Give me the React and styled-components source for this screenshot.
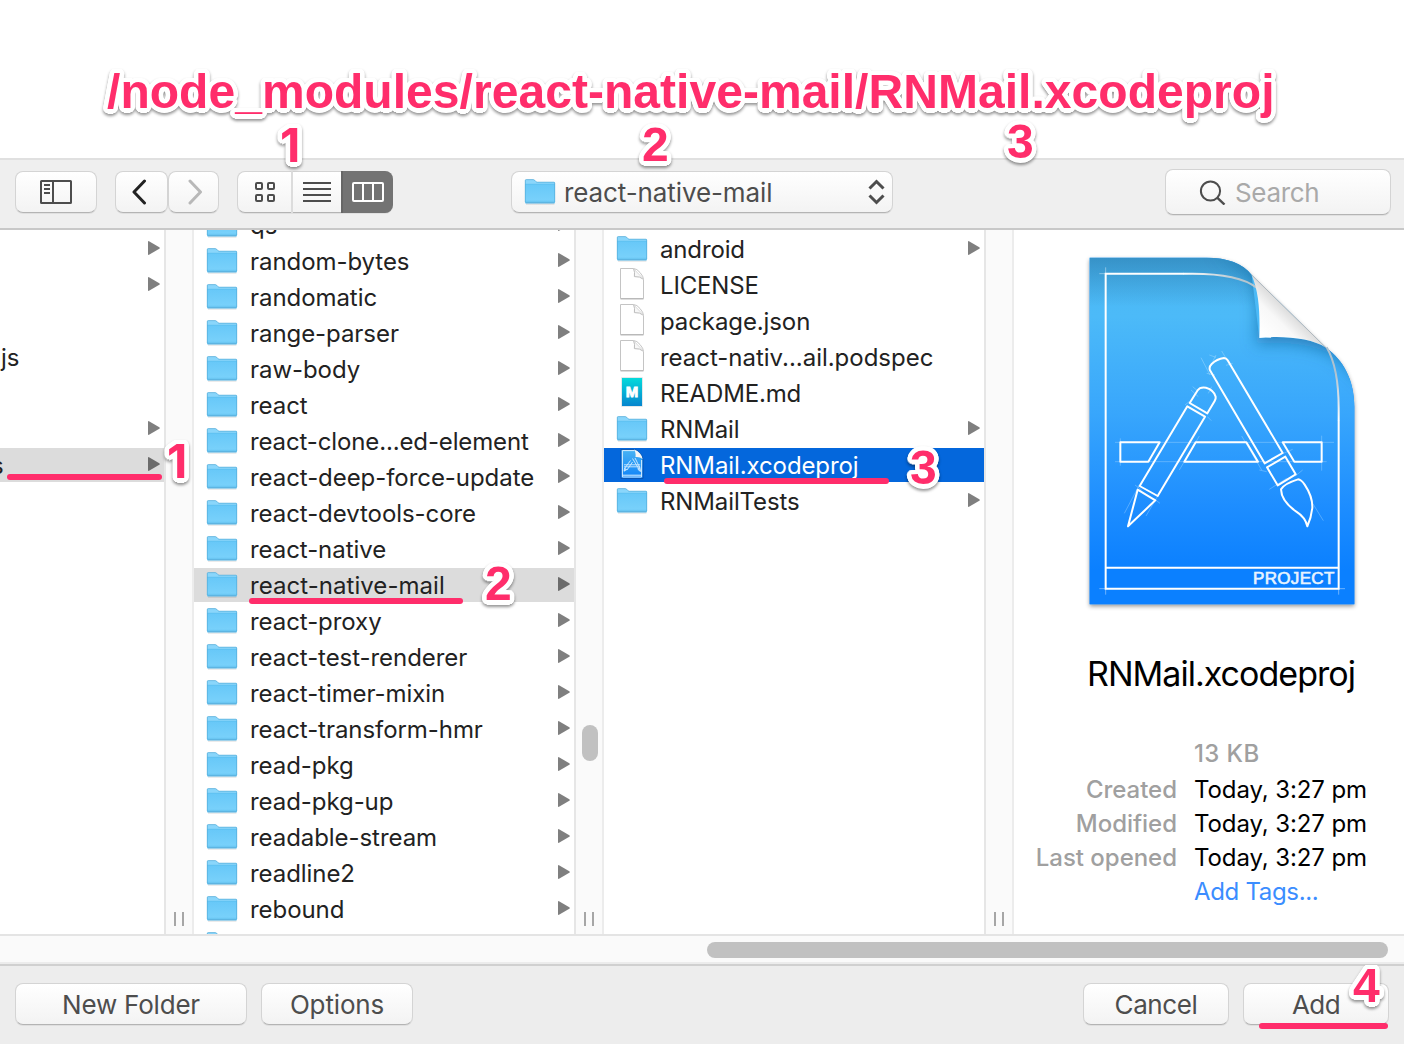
import React from "react";
import styled, { createGlobalStyle, css } from "styled-components";

const PINK = "#ff2d6b";

const GlobalStyle = createGlobalStyle`
  *, *::before, *::after { box-sizing: border-box; }
  body {
    margin: 0;
    background: #fff;
    font-family: Inter, Roboto, "Liberation Sans", sans-serif;
    overflow: hidden;
  }
  button { font: inherit; }
`;

const Screen = styled.div`
  position: relative;
  display: flex;
  flex-direction: column;
  width: 1404px;
  height: 1044px;
  overflow: hidden;
  background: #fff;
`;

const TitleArea = styled.header`
  flex: none;
  height: 158px;
`;

const surface = css`
  border: 1px solid #d4d4d4;
  border-bottom-color: #b4b4b4;
  background: linear-gradient(#fff, #f3f3f3);
  box-shadow: 0 1px 0 rgba(0, 0, 0, 0.06);
`;

const Toolbar = styled.div`
  flex: none;
  display: flex;
  align-items: center;
  height: 72px;
  padding: 0 13px 4px 15px;
  border-top: 2px solid #e0e0e0;
  border-bottom: 2px solid #c8c8c8;
  background: #efefef;
`;

const ToolButton = styled.button`
  ${surface}
  display: grid;
  place-items: center;
  width: ${(p) => p.$width}px;
  height: 42px;
  margin: 0 ${(p) => p.$after || 0}px 0 0;
  padding: 0;
  border-radius: 8px;
`;

const Segments = styled.div`
  ${surface}
  display: flex;
  width: 156px;
  height: 42px;
  margin-right: 118px;
  border-radius: 8px;
`;

const Segment = styled.button`
  flex: none;
  display: grid;
  place-items: center;
  width: ${(p) => p.$width}px;
  height: 42px;
  margin: -1px 0;
  padding: 0;
  border: 0;
  border-left: ${(p) => (p.$divided ? "2px solid #dcdcdc" : p.$active ? "2px solid #666" : "0")};
  border-radius: ${(p) => (p.$active ? "0 8px 8px 0" : "0")};
  background: ${(p) => (p.$active ? "#737373" : "transparent")};
`;

const PathPopup = styled.button`
  ${surface}
  display: flex;
  align-items: center;
  width: 382px;
  height: 42px;
  margin-right: auto;
  padding: 0 7px 0 12px;
  border-radius: 8px;
  color: #4d4d4d;
  font-size: 26px;
  letter-spacing: ${(p) => p.$spacing}px;
`;

const PopupLabel = styled.span`
  flex: 1;
  padding-left: 8px;
  text-align: left;
`;

const SearchField = styled.div`
  ${surface}
  display: flex;
  align-items: center;
  gap: 9px;
  width: 226px;
  height: 46px;
  padding-left: 33px;
  border-radius: 8px;
  color: #a9a9a9;
  font-size: 26px;
  letter-spacing: -0.35px;
`;

const Browser = styled.main`
  flex: none;
  display: flex;
  height: 704px;
  overflow: hidden;
`;

const Column = styled.ul`
  flex: none;
  width: ${(p) => p.$width}px;
  margin: ${(p) => p.$scroll}px 0 0;
  padding: 0;
  list-style: none;
`;

const Row = styled.li`
  display: flex;
  align-items: center;
  height: 34px;
  margin-bottom: 2px;
  padding: 0 4px 0 ${(p) => (p.$clipped ? 0 : 12)}px;
  background: ${(p) => (p.$state === "active" ? "#0467dc" : p.$state === "path" ? "#dcdcdc" : "transparent")};
  color: ${(p) => (p.$state === "active" ? "#fff" : "#222")};
  font-size: 24px;
`;

const IconSlot = styled.span`
  flex: none;
  display: grid;
  place-items: center;
  width: 32px;
  height: 34px;
  margin-right: 12px;
`;

const Label = styled.span`
  flex: 1;
  white-space: nowrap;
  line-height: 34px;
  letter-spacing: ${(p) => p.$spacing}px;
  margin-left: ${(p) => p.$shift || 0}px;
  padding-top: 1px;
`;

const Gutter = styled.div`
  flex: none;
  display: flex;
  flex-direction: column;
  justify-content: flex-end;
  align-items: center;
  width: 30px;
  padding-bottom: 8px;
  border-left: 2px solid #e6e6e6;
  border-right: 2px solid #ececec;
  background: #fafafa;
`;

const VerticalThumb = styled.div`
  width: 16px;
  height: 36px;
  margin: 0 0 151px 2px;
  border-radius: 8px;
  background: #c1c1c1;
`;

const Grip = styled.div`
  width: 10px;
  height: 14px;
  border-left: 2px solid #a6a6a6;
  border-right: 2px solid #a6a6a6;
`;

const Preview = styled.section`
  flex: 1;
  display: flex;
  flex-direction: column;
  padding-top: 10px;
`;

const PreviewArt = styled.svg`
  flex: none;
  margin-left: 56px;
`;

const PreviewName = styled.h1`
  width: 414px;
  margin: 32px 0 0;
  color: #000;
  font-size: 34px;
  font-weight: 400;
  line-height: 44px;
  letter-spacing: -0.97px;
  text-align: center;
`;

const Facts = styled.dl`
  display: grid;
  grid-template-columns: 163px 1fr;
  column-gap: 17px;
  grid-template-rows: 36px;
  grid-auto-rows: 34px;
  margin: 41px 0 0;
  font-size: 24px;
  line-height: 34px;
  white-space: nowrap;
`;

const FactName = styled.dt`
  color: #a0a0a0;
  font-weight: 500;
  letter-spacing: -0.03px;
  text-align: right;
`;

const FactValue = styled.dd`
  margin: 0;
  color: ${(p) => p.$color || "#000"};
  font-weight: ${(p) => (p.$strong ? 500 : 400)};
  letter-spacing: ${(p) => p.$spacing ?? -0.1}px;
`;

const ScrollTrack = styled.div`
  flex: none;
  display: flex;
  justify-content: flex-end;
  height: 30px;
  padding: 6px 16px 0 0;
  border-top: 2px solid #e4e4e4;
  border-bottom: 2px solid #ececec;
  background: #fafafa;
`;

const HorizontalThumb = styled.div`
  width: 681px;
  height: 16px;
  border-radius: 8px;
  background: #c1c1c1;
`;

const Footer = styled.footer`
  flex: 1;
  display: flex;
  align-items: flex-start;
  gap: 14px;
  padding: 17px 15px 0;
  border-top: 2px solid #d0d0d0;
  background: #ededed;
`;

const PushButton = styled.button`
  ${surface}
  width: ${(p) => p.$width}px;
  height: 42px;
  margin-left: ${(p) => (p.$pushRight ? "auto" : "0")};
  padding: 0;
  border-radius: 8px;
  color: #4d4d4d;
  font-size: 26px;
  letter-spacing: ${(p) => p.$spacing}px;
`;

const halo = Array.from({ length: 24 }, (_, i) => {
  const angle = (i / 24) * Math.PI * 2;
  return `${(Math.cos(angle) * 4.5).toFixed(2)}px ${(Math.sin(angle) * 4.5).toFixed(2)}px 0 #fff`;
}).join(", ");

const Callout = styled.span`
  position: absolute;
  left: ${(p) => p.$x}px;
  top: ${(p) => p.$baseline - 43}px;
  color: ${PINK};
  font: 700 48px/53px "Liberation Sans", Arial, sans-serif;
  letter-spacing: ${(p) => p.$spacing || 0}px;
  white-space: nowrap;
  text-shadow: ${halo}, 0 0 3px #fff;
  filter: drop-shadow(0 2px 1.5px rgba(0, 0, 0, 0.42));
`;

const CalloutOne = styled(Callout)`
  font: 700 47px/53px Inter, sans-serif;
`;

const Underline = styled.span`
  position: absolute;
  left: ${(p) => p.$x}px;
  top: ${(p) => p.$y}px;
  width: ${(p) => p.$width}px;
  height: 6px;
  border-radius: 3px;
  background: ${PINK};
`;

const FolderIcon = () => (
  <svg width="32" height="26" viewBox="-1 0 32 26">
    <defs>
      <linearGradient id="folderFront" x1="0" y1="0" x2="0" y2="1">
        <stop offset="0" stopColor="#67c8f8" />
        <stop offset="1" stopColor="#7bd2fb" />
      </linearGradient>
    </defs>
    <path d="M1 25h28.4" stroke="#000" strokeOpacity=".16" />
    <path d="M0 1.6Q0 .4 1.2 .4H8.2Q9 .4 9.6 1L11 2.6Q11.400 3 12.200 3H29Q30 3 30 4V23.300Q30 24.200 29 24.200H1Q0 24.200 0 23.300Z" fill="#8ad6fb" />
    <path d="M0 5H30V23.300Q30 24.200 29 24.200H1Q0 24.200 0 23.300Z" fill="url(#folderFront)" />
    <path d="M.4 23.800H29.600" stroke="#4ea6d4" strokeWidth=".9" />
    <path d="M.3 5.200H29.700M.3 22.300H29.700" stroke="#56b8e8" strokeWidth=".5" />
    <path d="M.3 23V1.600Q.3 .6 1.200 .6H8.200Q9 .6 9.600 1.200L11 2.700Q11.400 3.200 12.200 3.200H29Q29.700 3.200 29.700 4V23" fill="none" stroke="#52abd8" strokeWidth=".7" />
  </svg>
);

const DocIcon = () => (
  <svg width="26" height="34" viewBox="0 0 26 34">
    <path d="M1.500 .5H14.500Q18 .7 21 4.500Q24.500 8.500 24.500 11.500V30.500H1.500Z" fill="#fff" stroke="#c4c4c4" />
    <path d="M1.500 31h23" stroke="#aaa" strokeWidth=".8" />
    <path d="M14.600 .8Q16 4 15.400 8.600Q21 8.200 24.200 11.200" fill="#f7f7f7" stroke="#bcbcbc" />
    <path d="M14.800 1L24 10.500" stroke="#cfcfcf" strokeWidth=".8" />
  </svg>
);

const MarkdownIcon = () => (
  <svg width="22" height="32" viewBox="0 0 22 32">
    <defs>
      <linearGradient id="md" x1="0" y1="0" x2="0" y2="1">
        <stop offset="0" stopColor="#05dadb" />
        <stop offset="1" stopColor="#0685ce" />
      </linearGradient>
    </defs>
    <rect x=".3" y=".3" width="21.400" height="29.400" fill="#d8dfe2" />
    <rect x="1" y="1" width="20" height="28" fill="url(#md)" />
    <text x="11" y="20.300" textAnchor="middle" fill="#fff" stroke="#fff" strokeWidth=".9" fontFamily="Liberation Sans, Arial, sans-serif" fontWeight="700" fontSize="15">M</text>
  </svg>
);

const XcodeSmallIcon = () => (
  <svg width="24" height="34" viewBox="0 0 24 34">
    <defs>
      <linearGradient id="xs" x1="0" y1="0" x2="0" y2="1">
        <stop offset="0" stopColor="#49b4f3" />
        <stop offset="1" stopColor="#0f82f8" />
      </linearGradient>
    </defs>
    <path d="M1 1.500H14Q18 2 20 5Q23 8 23 12V30.500H1Z" fill="url(#xs)" stroke="#0a4da4" strokeWidth=".8" />
    <path d="M14 1.500Q16 4 15.500 9Q20 8.500 22.600 11Q22.500 8.500 20 5.500Q17.500 2.500 14 1.500Z" fill="#f5f5f5" />
    <path d="M14.500 2.600H2.400V29H21.600V12M2.400 27.200H21.600" fill="none" stroke="#d9efff" strokeWidth="1" />
    <path d="M12.500 10.500L18.300 20M15 10L20 20M10.500 12.500L4.500 20.500M12.500 14L7 22M4 16.800H20.200M4 18.800H20.200" fill="none" stroke="#d4ecff" strokeWidth=".9" />
    <path d="M4 23.200L4.600 20.200L6.800 21.600ZM17.800 20.500L20 19.800L20.600 23.500Q18.200 22.500 17.800 20.500Z" fill="#9ed0ff" stroke="#e6f5ff" strokeWidth=".7" />
  </svg>
);

const icons = { folder: FolderIcon, doc: DocIcon, md: MarkdownIcon, xcode: XcodeSmallIcon };

const Arrow = ({ dark }) => (
  <svg width="12" height="16" viewBox="0 0 12 16">
    <path d="M0 .8Q0 -.2 1 .2L11.300 6.200Q12.300 7 11.300 7.800L1 13.800Q0 14.200 0 13.200Z" fill={dark ? "#6b6b6b" : "#7f7f7f"} />
  </svg>
);

const SidebarIcon = () => (
  <svg width="32" height="24" viewBox="0 0 32 24" fill="none" stroke="#4d4d4d" strokeWidth="2">
    <rect x="1" y="1" width="30" height="22" rx=".5" />
    <path d="M13 1V23M4 5H10M4 9H10M4 13H10" />
  </svg>
);

const Chevron = ({ back }) => (
  <svg width="20" height="26" viewBox="0 0 20 26" fill="none" strokeWidth="3" strokeLinecap="round" strokeLinejoin="round" stroke={back ? "#222" : "#b8b8b8"}>
    <path d={back ? "M12.500 2L2 13L12.500 24" : "M6 2L16.500 13L6 24"} />
  </svg>
);

const GridIcon = () => (
  <svg width="22" height="22" viewBox="0 0 22 22" fill="none" stroke="#4d4d4d" strokeWidth="2">
    <rect x="2" y="2" width="6" height="6" rx="1" />
    <rect x="14" y="2" width="6" height="6" rx="1" />
    <rect x="2" y="14" width="6" height="6" rx="1" />
    <rect x="14" y="14" width="6" height="6" rx="1" />
  </svg>
);

const LinesIcon = () => (
  <svg width="28" height="20" viewBox="0 0 28 20" stroke="#4d4d4d" strokeWidth="2">
    <path d="M0 1H28M0 7H28M0 13H28M0 19H28" />
  </svg>
);

const ColumnsIcon = () => (
  <svg width="32" height="20" viewBox="0 0 32 20" fill="none" stroke="#fff" strokeWidth="2">
    <rect x="1" y="1" width="30" height="18" rx="1" />
    <path d="M11 1V19M21 1V19" />
  </svg>
);

const UpDownIcon = () => (
  <svg width="17" height="26" viewBox="0 0 17 26" fill="none" stroke="#4d4d4d" strokeWidth="3">
    <path d="M1.500 9.500L8.500 2.500L15.500 9.500M1.500 16.500L8.500 23.500L15.500 16.500" />
  </svg>
);

const SearchIcon = () => (
  <svg width="27" height="26" viewBox="0 0 27 26" fill="none" stroke="#4d4d4d" strokeWidth="2">
    <circle cx="11.500" cy="12" r="9.600" />
    <path d="M18.200 18.600L25.500 25.500" strokeWidth="2.400" />
  </svg>
);

const PAGE = "M59 53H410C470 53 520 70 545 105L568 294C640 286 725 295 768 323C820 360 853 420 853 500V1093H59Z";
const SHEET = "M59 53H410C470 53 520 70 545 105L768 323C820 360 853 420 853 500V1093H59Z";

const ProjectArt = () => (
  <PreviewArt width="310" height="380" viewBox="0 0 930 1140">
    <defs>
      <linearGradient id="page" x1="0" y1="53" x2="0" y2="1093" gradientUnits="userSpaceOnUse">
        <stop offset="0" stopColor="#4bb8f2" />
        <stop offset=".17" stopColor="#4cbaf8" />
        <stop offset=".45" stopColor="#38a6fc" />
        <stop offset=".72" stopColor="#1d8dff" />
        <stop offset=".9" stopColor="#0b80ff" />
        <stop offset="1" stopColor="#0b80ff" />
      </linearGradient>
      <linearGradient id="topShade" x1="0" y1="53" x2="0" y2="200" gradientUnits="userSpaceOnUse">
        <stop offset="0" stopColor="#1a5d8c" stopOpacity=".42" />
        <stop offset="1" stopColor="#1a5d8c" stopOpacity="0" />
      </linearGradient>
      <linearGradient id="curl" x1="590" y1="290" x2="672" y2="205" gradientUnits="userSpaceOnUse">
        <stop offset="0" stopColor="#fff" />
        <stop offset=".5" stopColor="#f8f8f8" />
        <stop offset="1" stopColor="#d2d2d2" />
      </linearGradient>
      <linearGradient id="frameTop" x1="340" y1="0" x2="500" y2="0" gradientUnits="userSpaceOnUse">
        <stop offset="0" stopColor="#fff" />
        <stop offset="1" stopColor="#b6c6cf" />
      </linearGradient>
      <linearGradient id="frameSide" x1="0" y1="400" x2="0" y2="540" gradientUnits="userSpaceOnUse">
        <stop offset="0" stopColor="#b0c2cf" />
        <stop offset="1" stopColor="#fff" />
      </linearGradient>
      <filter id="pageShadow" x="-10%" y="-10%" width="120%" height="120%">
        <feDropShadow dx="0" dy="6" stdDeviation="7" floodOpacity=".42" />
      </filter>
      <filter id="curlBlur" x="-50%" y="-50%" width="200%" height="200%">
        <feGaussianBlur stdDeviation="24" />
      </filter>
      <clipPath id="pageClip">
        <path d={PAGE} />
      </clipPath>
    </defs>
    <path d={SHEET} fill="#1c84e8" filter="url(#pageShadow)" />
    <path d={SHEET} fill="url(#page)" />
    <g clipPath="url(#pageClip)">
      <path d="M59 53H853V200H59Z" fill="url(#topShade)" />
      <path d="M430 30L545 105Q572 170 560 312Q700 295 800 350L900 440L900 200Z" fill="#175a92" fillOpacity=".6" filter="url(#curlBlur)" />
    </g>
    <g fill="none" stroke="#fff" strokeWidth="6">
      <path d="M340 101H107V1046H806V540" />
      <path d="M107 983H806" />
      <path d="M339 101H368C450 101 520 112 560 143" stroke="url(#frameTop)" />
      <path d="M806 541V505C806 430 798 370 770 322" stroke="url(#frameSide)" />
      <path d="M107 82V101H88M107 1064V1046H88M806 1064V1046H825" strokeWidth="2" strokeOpacity=".6" />
    </g>
    <path d="M545 105C568 160 570 220 568 294C640 286 725 295 768 323Z" fill="url(#curl)" />
    <path d="M545 105L768 323" stroke="#b4b4b4" strokeWidth="2.500" />
    <g fill="none" stroke="#d8f0ff" strokeOpacity=".45" strokeWidth="2">
      <path d="M135 607H792M135 665H770M151 595V677M755 587V692M393 353L420 405M455 333L470 358M163 820L208 735M228 828L262 770M590 695L568 690M598 748L650 715M728 790L760 842M388 588L328 690M515 588L575 690M418 345L438 352M438 345L428 365M410 400L435 405M363 450L385 470M368 440L382 452M425 440L415 460M488 370L468 376M676 708L698 690M640 640L668 628M412 530L424 542M345 495L357 485M195 735L215 750M250 775L270 790" />
    </g>
    <g fill="none" stroke="#fff" strokeWidth="6" strokeLinejoin="round">
      <path d="M151 607H269L235 665H151Z" />
      <path d="M377 607H529L564 665H343Z" />
      <path d="M638 607H755V665H673Z" />
      <path d="M359 489L383 451Q390 440 408 443Q432 450 437 470Q438 476 434 483L412 520Z" />
      <path d="M352 499L405 530L263 768L209 738Z" />
      <path d="M203 749L256 781L174 859Z" />
      <path d="M584 670L420 391Q416 381 425 372Q440 357 462 354Q469 354 473 361L638 639Z" />
      <path d="M591 682L646 650L677 703L623 736Z" />
      <path d="M633 748Q642 731 684 718Q694 719 704 734Q728 770 727 803Q724 832 712 859Q706 832 679 815Q634 784 633 748Z" />
    </g>
    <text x="549" y="1031" textLength="244" fill="#e7f4ff" fontFamily="Liberation Sans, Arial, sans-serif" fontSize="51" stroke="#e7f4ff" strokeWidth="2">PROJECT</text>
  </PreviewArt>
);

const clippedRows = [
  { arrow: true },
  { arrow: true },
  {},
  { name: "js", shift: 1 },
  {},
  { arrow: true },
  { name: "s", shift: -9, arrow: true, state: "path" },
];

const moduleRows = [
  "qs", "random-bytes", "randomatic", "range-parser", "raw-body", "react",
  "react-clone...ed-element", "react-deep-force-update", "react-devtools-core",
  "react-native", "react-native-mail", "react-proxy", "react-test-renderer",
  "react-timer-mixin", "react-transform-hmr", "read-pkg", "read-pkg-up",
  "readable-stream", "readline2", "rebound", "",
].map((name) => ({
  name,
  icon: "folder",
  arrow: true,
  state: name === "react-native-mail" ? "path" : undefined,
  spacing: name.includes("...") ? -0.13 : name === "react-native-mail" ? 0.05 : -0.06,
}));

const packageRows = [
  { name: "android", icon: "folder", arrow: true, spacing: -0.15 },
  { name: "LICENSE", icon: "doc", spacing: -0.15 },
  { name: "package.json", icon: "doc", spacing: -0.1 },
  { name: "react-nativ...ail.podspec", icon: "doc", spacing: -0.02 },
  { name: "README.md", icon: "md", spacing: -0.15 },
  { name: "RNMail", icon: "folder", arrow: true, spacing: -0.15 },
  { name: "RNMail.xcodeproj", icon: "xcode", state: "active", spacing: -0.1 },
  { name: "RNMailTests", icon: "folder", arrow: true, spacing: -0.12 },
];

const FileColumn = ({ rows, width, scroll, clipped }) => (
  <Column $width={width} $scroll={scroll}>
    {rows.map((row, i) => {
      const Icon = icons[row.icon];
      return (
        <Row key={i} $state={row.state} $clipped={clipped}>
          {Icon && <IconSlot><Icon /></IconSlot>}
          <Label $shift={row.shift} $spacing={row.spacing ?? -0.06}>{row.name}</Label>
          {row.arrow && <Arrow dark={row.state === "path"} />}
        </Row>
      );
    })}
  </Column>
);

export default function App() {
  return (
    <Screen>
      <GlobalStyle />
      <TitleArea />
      <Toolbar>
        <ToolButton $width={82} $after={18}><SidebarIcon /></ToolButton>
        <ToolButton $width={53}><Chevron back /></ToolButton>
        <ToolButton $width={51} $after={18}><Chevron /></ToolButton>
        <Segments>
          <Segment $width={53}><GridIcon /></Segment>
          <Segment $width={50} $divided><LinesIcon /></Segment>
          <Segment $width={52} $active><ColumnsIcon /></Segment>
        </Segments>
        <PathPopup $spacing={-0.1}>
          <FolderIcon />
          <PopupLabel>react-native-mail</PopupLabel>
          <UpDownIcon />
        </PathPopup>
        <SearchField><SearchIcon />Search</SearchField>
      </Toolbar>
      <Browser>
        <FileColumn rows={clippedRows} width={164} scroll={2} clipped />
        <Gutter><Grip /></Gutter>
        <FileColumn rows={moduleRows} width={380} scroll={-22} />
        <Gutter><VerticalThumb /><Grip /></Gutter>
        <FileColumn rows={packageRows} width={380} scroll={2} />
        <Gutter><Grip /></Gutter>
        <Preview>
          <ProjectArt />
          <PreviewName>RNMail.xcodeproj</PreviewName>
          <Facts>
            <FactName />
            <FactValue $strong $spacing={0.4} $color="#a0a0a0">13 KB</FactValue>
            <FactName>Created</FactName>
            <FactValue>Today, 3:27 pm</FactValue>
            <FactName>Modified</FactName>
            <FactValue>Today, 3:27 pm</FactValue>
            <FactName>Last opened</FactName>
            <FactValue>Today, 3:27 pm</FactValue>
            <FactName />
            <FactValue $spacing={-0.33} $color="#3b8dff">Add Tags...</FactValue>
          </Facts>
        </Preview>
      </Browser>
      <ScrollTrack><HorizontalThumb /></ScrollTrack>
      <Footer>
        <PushButton $width={232} $spacing={-0.2}>New Folder</PushButton>
        <PushButton $width={152} $spacing={-0.15}>Options</PushButton>
        <PushButton $width={146} $spacing={-0.4} $pushRight>Cancel</PushButton>
        <PushButton $width={146} $spacing={-0.6}>Add</PushButton>
      </Footer>
      <Callout $x={107} $baseline={108} $spacing={0.04}>/node_modules/react-native-mail/RNMail.xcodeproj</Callout>
      <CalloutOne $x={280} $baseline={161}>1</CalloutOne>
      <Callout $x={642} $baseline={161}>2</Callout>
      <Callout $x={1007} $baseline={158}>3</Callout>
      <CalloutOne $x={167} $baseline={477}>1</CalloutOne>
      <Callout $x={485} $baseline={600}>2</Callout>
      <Callout $x={910} $baseline={484}>3</Callout>
      <Underline $x={7} $y={474} $width={155} />
      <Underline $x={249} $y={598} $width={214} />
      <Underline $x={664} $y={478} $width={225} />
      <Underline $x={1259} $y={1023} $width={129} />
      <Callout $x={1353} $baseline={1002}>4</Callout>
    </Screen>
  );
}
